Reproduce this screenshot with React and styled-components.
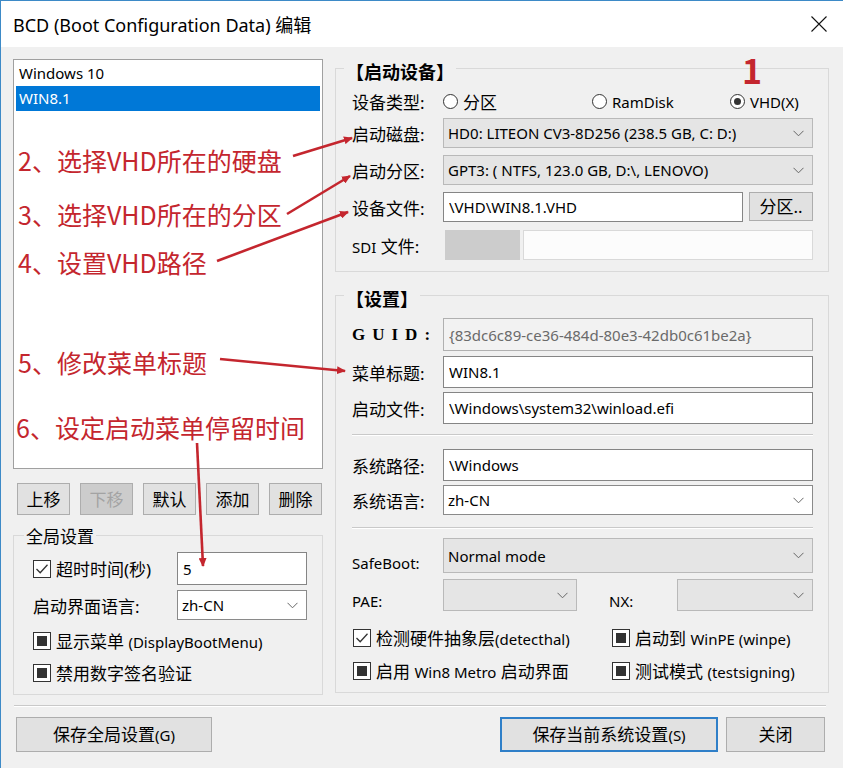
import React from "react";
import styled, { createGlobalStyle } from "styled-components";

const UI = `"Noto Sans", "Noto Sans CJK SC", sans-serif`;
const CJK = `"Noto Sans CJK SC", "Noto Sans", sans-serif`;
const RED = "#c4262e";

const GlobalStyle = createGlobalStyle`
  html, body { margin: 0; padding: 0; background: #f0f0f0; }
  body { font-family: ${UI}; color: #000; }
  #root { width: 843px; }
`;

const Page = styled.div`
  position: relative;
  width: 843px;
  height: 768px;
  overflow: hidden;
`;

const Window = styled.div`
  width: 843px;
  height: 768px;
  box-sizing: border-box;
  border-left: 1px solid #3d8ac7;
  border-top: 1px solid #3d8ac7;
  background: #f0f0f0;
  display: flex;
  flex-direction: column;
`;

const TitleBar = styled.div`
  height: 46px;
  flex: none;
  background: #fff;
  display: flex;
  align-items: center;
  justify-content: space-between;
  padding: 0 16px 0 12px;
`;

const TitleText = styled.div`
  font-family: ${UI};
  font-size: 18px;
  color: #000;
`;

const Body = styled.div`
  flex: 1;
  display: flex;
  flex-direction: column;
  padding: 12px 0 0 12px;
`;

const Main = styled.div`
  display: flex;
  gap: 12px;
  align-items: flex-start;
`;

const LeftCol = styled.div`
  width: 310px;
  display: flex;
  flex-direction: column;
`;

const RightCol = styled.div`
  width: 494px;
  margin-top: 9px;
  display: flex;
  flex-direction: column;
  gap: 23px;
`;

/* boot entry list */
const ListBox = styled.div`
  height: 410px;
  box-sizing: border-box;
  border: 1px solid #a0a0a0;
  background: #fff;
  padding: 1px 2px;
`;

const ListItem = styled.div`
  height: 25px;
  line-height: 25px;
  padding-left: 3px;
  font-size: 15px;
  background: ${(p) => (p.$selected ? "#0078d7" : "transparent")};
  color: ${(p) => (p.$selected ? "#fff" : "#000")};
`;

const ButtonRow = styled.div`
  margin-top: 14px;
  display: flex;
  justify-content: space-between;
  padding: 0 1px 0 4px;
`;

const Btn = styled.button`
  width: ${(p) => p.$w}px;
  height: ${(p) => p.$h}px;
  box-sizing: border-box;
  margin: 0;
  padding: 0;
  border: ${(p) => (p.$primary ? "2px solid #2f7fc8" : "1px solid #adadad")};
  background: ${(p) => (p.$disabled ? "#cccccc" : "#e1e1e1")};
  color: ${(p) => (p.$disabled ? "#a3a3a3" : "#000")};
  font-family: ${UI};
  font-size: 17px;
  line-height: 1;
`;

/* group boxes */
const Group = styled.div`
  margin-top: ${(p) => p.$mt || 0}px;
  border: 1px solid #d9d9d9;
  padding: 0 ${(p) => p.$pr}px ${(p) => p.$pb}px ${(p) => p.$pl}px;
  display: flex;
  flex-direction: column;
`;

const GroupTitle = styled.div`
  width: fit-content;
  height: 20px;
  line-height: 20px;
  margin: ${(p) => p.$up}px 0 0 ${(p) => p.$indent}px;
  padding: 0 2px;
  background: #f0f0f0;
  font-size: ${(p) => (p.$bold ? 18 : 17)}px;
  font-weight: ${(p) => (p.$bold ? 700 : 400)};
  white-space: nowrap;
`;

const FormRow = styled.div`
  display: grid;
  grid-template-columns: ${(p) => p.$cols || "91px 370px"};
  align-items: center;
  height: ${(p) => p.$h || 30}px;
  margin-top: ${(p) => p.$mt || 0}px;
`;

const Label = styled.div`
  font-size: ${(p) => (p.$latin ? 15 : 17)}px;
  white-space: nowrap;
  padding-top: ${(p) => p.$drop || 0}px;
  padding-left: ${(p) => p.$indent || 0}px;
`;

const GuidLabel = styled.div`
  font-family: "Liberation Serif", "DejaVu Serif", serif;
  font-weight: 700;
  font-size: 17px;
  letter-spacing: 7px;
`;

const Lat = styled.span`
  font-size: 15px;
`;

const TextBox = styled.input`
  height: 100%;
  width: 100%;
  box-sizing: border-box;
  margin: 0;
  padding: 0 5px;
  border: 1px solid ${(p) => (p.$muted ? "#b0b0b0" : "#858585")};
  background: ${(p) => (p.$muted ? "#f2f2f2" : "#fff")};
  color: ${(p) => (p.$muted ? "#6a6a6a" : "#000")};
  font-family: ${UI};
  font-size: 15px;
  outline: none;
`;

const Combo = styled.div`
  height: 100%;
  box-sizing: border-box;
  border: 1px solid ${(p) => (p.$white ? "#8a8a8a" : "#b9b9b9")};
  background: ${(p) => (p.$white ? "#fff" : "#e5e5e5")};
  display: flex;
  align-items: center;
  justify-content: space-between;
  padding: 0 8px 0 4px;
  font-size: 15px;
  white-space: nowrap;
`;

const Chevron = () => (
  <svg width="11" height="7" viewBox="0 0 11 7">
    <path d="M0.5 0.8 L5.5 5.8 L10.5 0.8" fill="none" stroke="#666" strokeWidth="1" />
  </svg>
);

const Select = ({ white, children }) => (
  <Combo $white={white}>
    <span>{children}</span>
    <Chevron />
  </Combo>
);

const SdiField = styled.div`
  height: 100%;
  display: flex;
  gap: 3px;
  padding-left: 2px;
`;

const SdiSwatch = styled.div`
  width: 75px;
  background: #cccccc;
`;

const SdiPath = styled.div`
  flex: 1;
  box-sizing: border-box;
  border: 1px solid #d9d9d9;
  background: #fcfcfc;
`;

const FileField = styled.div`
  height: 100%;
  display: flex;
  gap: 6px;
`;

const Divider = styled.div`
  height: 0;
  border-top: 1px solid #c9c9c9;
  border-bottom: 1px solid #ffffff;
  margin: ${(p) => p.$m};
`;

/* radios */
const RadioGroup = styled.div`
  display: flex;
  align-items: center;
`;

const RadioOption = styled.label`
  width: ${(p) => (p.$w ? `${p.$w}px` : "auto")};
  display: flex;
  align-items: center;
  gap: 5px;
  font-size: ${(p) => (p.$latin ? 15 : 17)}px;
`;

const RadioRing = styled.span`
  width: 15px;
  height: 15px;
  box-sizing: border-box;
  border-radius: 50%;
  border: 1px solid #333;
  background: #fff;
  display: inline-flex;
  align-items: center;
  justify-content: center;
  flex: none;
`;

const RadioDot = styled.span`
  width: 7px;
  height: 7px;
  border-radius: 50%;
  background: #333;
`;

const Radio = ({ checked, w, latin, children }) => (
  <RadioOption $w={w} $latin={latin}>
    <RadioRing>{checked && <RadioDot />}</RadioRing>
    {children}
  </RadioOption>
);

/* check boxes */
const CheckItem = styled.div`
  display: flex;
  align-items: center;
  gap: 5px;
  font-size: 17px;
  white-space: nowrap;
  margin-left: ${(p) => p.$indent || 0}px;
`;

const CheckSquare = styled.span`
  width: 18px;
  height: 18px;
  box-sizing: border-box;
  border: 1px solid #333;
  background: #fff;
  display: inline-flex;
  align-items: center;
  justify-content: center;
  flex: none;
`;

const CheckFill = styled.span`
  width: 10px;
  height: 10px;
  background: #333;
`;

const Check = ({ state, indent, children }) => (
  <CheckItem $indent={indent}>
    <CheckSquare>
      {state === "on" && (
        <svg width="14" height="12" viewBox="0 0 14 12">
          <path d="M1.5 6 L5.2 9.8 L12.5 1.8" fill="none" stroke="#333" strokeWidth="1.3" />
        </svg>
      )}
      {state === "mixed" && <CheckFill />}
    </CheckSquare>
    <span>{children}</span>
  </CheckItem>
);

const CheckGrid = styled.div`
  display: grid;
  grid-template-columns: 260px 1fr;
  align-items: center;
  height: 24px;
  margin-top: ${(p) => p.$mt}px;
`;

/* bottom bar */
const BottomBar = styled.div`
  margin-top: 10px;
  display: flex;
  gap: 8px;
  padding: 0 18px 0 3px;
`;

const Spacer = styled.div`
  flex: 1;
`;

/* red callouts drawn on top of the dialog */
const Callout = styled.div`
  position: absolute;
  left: ${(p) => p.$x}px;
  top: ${(p) => p.$y}px;
  font-family: ${CJK};
  font-size: ${(p) => p.$size || 25}px;
  font-weight: ${(p) => (p.$bold ? 700 : 400)};
  line-height: ${(p) => p.$lh || 30}px;
  color: ${RED};
  white-space: nowrap;
  pointer-events: none;
`;

const CalloutLines = styled.svg`
  position: absolute;
  left: 0;
  top: 0;
  pointer-events: none;
`;

const callouts = [
  { x: 18, y: 145, text: "2、选择VHD所在的硬盘" },
  { x: 18, y: 199, text: "3、选择VHD所在的分区" },
  { x: 18, y: 247, text: "4、设置VHD路径" },
  { x: 18, y: 347, text: "5、修改菜单标题" },
  { x: 16, y: 412, text: "6、设定启动菜单停留时间" },
];

const arrows = [
  [293, 156, 352, 138],
  [287, 214, 350, 176],
  [217, 261, 348, 212],
  [220, 359, 345, 371],
  [197, 443, 203, 566],
];

const CloseIcon = () => (
  <svg width="16" height="16" viewBox="0 0 16 16">
    <path d="M0.5 0.5 L15.5 15.5 M15.5 0.5 L0.5 15.5" stroke="#111" strokeWidth="1.1" fill="none" />
  </svg>
);

export default function App() {
  return (
    <>
      <GlobalStyle />
      <Page>
        <Window>
          <TitleBar>
            <TitleText>BCD (Boot Configuration Data) 编辑</TitleText>
            <CloseIcon />
          </TitleBar>

          <Body>
            <Main>
              <LeftCol>
                <ListBox>
                  <ListItem>Windows 10</ListItem>
                  <ListItem $selected>WIN8.1</ListItem>
                </ListBox>

                <ButtonRow>
                  <Btn $w={53} $h={32}>上移</Btn>
                  <Btn $w={53} $h={32} $disabled>下移</Btn>
                  <Btn $w={53} $h={32}>默认</Btn>
                  <Btn $w={53} $h={32}>添加</Btn>
                  <Btn $w={53} $h={32}>删除</Btn>
                </ButtonRow>

                <Group $mt={20} $pl={19} $pr={15} $pb={10}>
                  <GroupTitle $up={-9} $indent={-9}>全局设置</GroupTitle>
                  <FormRow $cols="144px 130px" $h={33} $mt={5}>
                    <Check state="on">超时时间(秒)</Check>
                    <TextBox readOnly value="5" />
                  </FormRow>
                  <FormRow $cols="144px 130px" $h={30} $mt={5}>
                    <Label>启动界面语言:</Label>
                    <Select white>zh-CN</Select>
                  </FormRow>
                  <CheckGrid $mt={8}>
                    <Check state="mixed">
                      显示菜单 <Lat>(DisplayBootMenu)</Lat>
                    </Check>
                  </CheckGrid>
                  <CheckGrid $mt={8}>
                    <Check state="mixed">禁用数字签名验证</Check>
                  </CheckGrid>
                </Group>
              </LeftCol>

              <RightCol>
                <Group $pl={16} $pr={15} $pb={11}>
                  <GroupTitle $up={-7} $indent={-8} $bold>【启动设备】</GroupTitle>
                  <FormRow $h={24} $mt={7}>
                    <Label>设备类型:</Label>
                    <RadioGroup>
                      <Radio w={149}>分区</Radio>
                      <Radio w={138} latin>RamDisk</Radio>
                      <Radio checked latin>VHD(X)</Radio>
                    </RadioGroup>
                  </FormRow>
                  <FormRow $mt={5}>
                    <Label>启动磁盘:</Label>
                    <Select>HD0: LITEON CV3-8D256 (238.5 GB, C: D:)</Select>
                  </FormRow>
                  <FormRow $mt={7}>
                    <Label>启动分区:</Label>
                    <Select>GPT3: ( NTFS, 123.0 GB, D:\, LENOVO)</Select>
                  </FormRow>
                  <FormRow $mt={7}>
                    <Label>设备文件:</Label>
                    <FileField>
                      <TextBox readOnly value="\VHD\WIN8.1.VHD" />
                      <Btn $w={79} $h={29}>分区..</Btn>
                    </FileField>
                  </FormRow>
                  <FormRow $mt={8}>
                    <Label>
                      <Lat>SDI</Lat> 文件:
                    </Label>
                    <SdiField>
                      <SdiSwatch />
                      <SdiPath />
                    </SdiField>
                  </FormRow>
                </Group>

                <Group $pl={16} $pr={15} $pb={10}>
                  <GroupTitle $up={-7} $indent={-8} $bold>【设置】</GroupTitle>
                  <FormRow $h={33} $mt={9}>
                    <GuidLabel>GUID:</GuidLabel>
                    <TextBox $muted readOnly value="{83dc6c89-ce36-484d-80e3-42db0c61be2a}" />
                  </FormRow>
                  <FormRow $h={32} $mt={5}>
                    <Label>菜单标题:</Label>
                    <TextBox readOnly value="WIN8.1" />
                  </FormRow>
                  <FormRow $h={32} $mt={4}>
                    <Label>启动文件:</Label>
                    <TextBox readOnly value="\Windows\system32\winload.efi" />
                  </FormRow>
                  <Divider $m="10px 0 0 0" />
                  <FormRow $h={32} $mt={13}>
                    <Label>系统路径:</Label>
                    <TextBox readOnly value="\Windows" />
                  </FormRow>
                  <FormRow $h={30} $mt={4}>
                    <Label>系统语言:</Label>
                    <Select white>zh-CN</Select>
                  </FormRow>
                  <Divider $m="12px 0 0 0" />
                  <FormRow $h={31} $mt={9}>
                    <Label $latin $drop={15}>SafeBoot:</Label>
                    <Select>Normal mode</Select>
                  </FormRow>
                  <FormRow $cols="91px 134px 100px 136px" $h={30} $mt={10}>
                    <Label $latin $drop={12}>PAE:</Label>
                    <Select> </Select>
                    <Label $latin $drop={12} $indent={32}>NX:</Label>
                    <Select> </Select>
                  </FormRow>
                  <CheckGrid $mt={16}>
                    <Check state="on" indent={1}>
                      检测硬件抽象层<Lat>(detecthal)</Lat>
                    </Check>
                    <Check state="mixed">
                      启动到 <Lat>WinPE (winpe)</Lat>
                    </Check>
                  </CheckGrid>
                  <CheckGrid $mt={9}>
                    <Check state="mixed" indent={1}>
                      启用 <Lat>Win8 Metro</Lat> 启动界面
                    </Check>
                    <Check state="mixed">
                      测试模式 <Lat>(testsigning)</Lat>
                    </Check>
                  </CheckGrid>
                </Group>
              </RightCol>
            </Main>

            <Divider $m="10px 17px 0 1px" />

            <BottomBar>
              <Btn $w={196} $h={35}>
                保存全局设置<Lat>(G)</Lat>
              </Btn>
              <Spacer />
              <Btn $w={218} $h={35} $primary>
                保存当前系统设置<Lat>(S)</Lat>
              </Btn>
              <Btn $w={99} $h={35}>关闭</Btn>
            </BottomBar>
          </Body>
        </Window>

        {callouts.map((c) => (
          <Callout key={c.text} $x={c.x} $y={c.y}>
            {c.text}
          </Callout>
        ))}
        <Callout $x={742} $y={53} $size={34} $lh={34} $bold>
          1
        </Callout>

        <CalloutLines width="843" height="768" viewBox="0 0 843 768">
          <defs>
            <marker
              id="callout-head"
              markerWidth="9"
              markerHeight="8"
              refX="8"
              refY="4"
              orient="auto"
              markerUnits="userSpaceOnUse"
            >
              <path d="M0 0 L9 4 L0 8 Z" fill={RED} />
            </marker>
          </defs>
          {arrows.map(([x1, y1, x2, y2]) => (
            <line
              key={`${x1}-${y1}`}
              x1={x1}
              y1={y1}
              x2={x2}
              y2={y2}
              stroke={RED}
              strokeWidth="2.6"
              markerEnd="url(#callout-head)"
            />
          ))}
        </CalloutLines>
      </Page>
    </>
  );
}
